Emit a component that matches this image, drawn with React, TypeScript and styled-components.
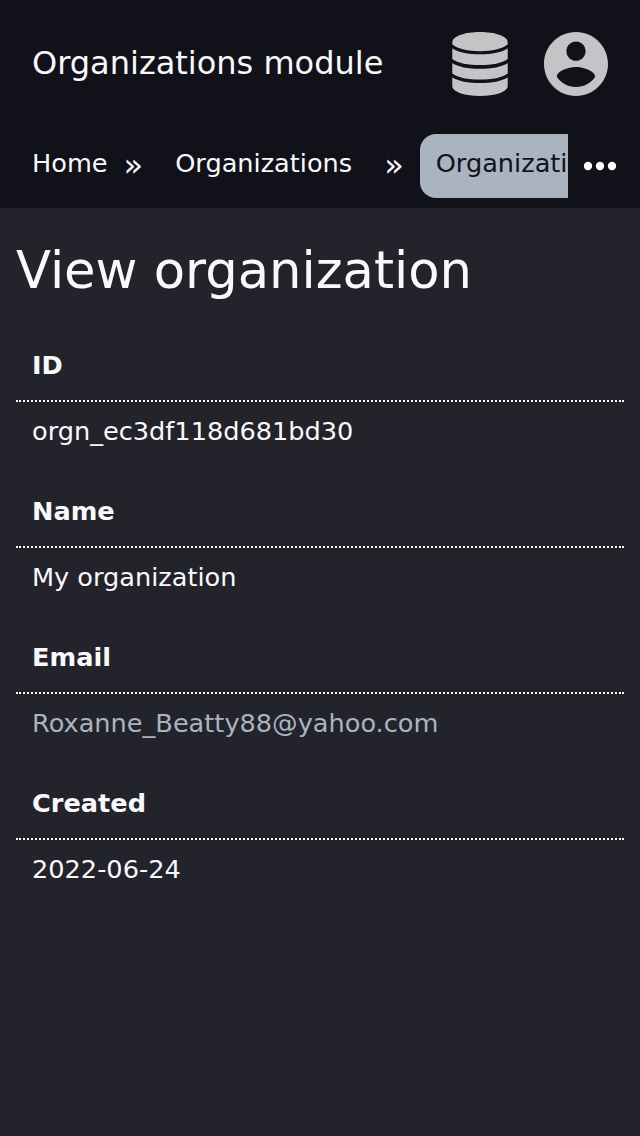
import React from 'react';
import styled, { createGlobalStyle } from 'styled-components';

const GlobalStyle = createGlobalStyle`
  * { box-sizing: border-box; }
  body { margin: 0; background: #23232b; color: #f9f9fd; font-family: "DejaVu Sans", sans-serif; font-size: 25.6px; }
`;

const Page = styled.div`
  min-height: 1136px;
  background: #23232b;
`;

const Header = styled.header`
  height: 208px;
  background: #11111a;
`;

const TopBar = styled.div`
  height: 128px;
  padding: 0 32px;
  display: flex;
  align-items: center;
  gap: 32px;
`;

const ModuleTitle = styled.span`
  flex: 1;
  font-size: 32px;
  line-height: 40px;
  padding-bottom: 2px;
`;

const Icon = styled.svg`
  display: block;
  flex: none;
  fill: #c4c4c6;
`;

const Trail = styled.nav`
  height: 80px;
  padding: 6px 24px 10px 16px;
  display: flex;
  align-items: center;
`;

const Crumbs = styled.div`
  width: 552px;
  flex: none;
  display: flex;
  align-items: center;
  overflow: hidden;
`;

const Crumb = styled.a<{ $active?: boolean }>`
  flex: none;
  height: 64px;
  padding: 0 16px 6px;
  border-radius: 16px;
  line-height: 58px;
  white-space: nowrap;
  color: ${p => (p.$active ? '#11111a' : '#f9f9fd')};
  background: ${p => (p.$active ? '#a9b4c0' : 'transparent')};
`;

const Separator = styled.span<{ $before: number }>`
  flex: none;
  height: 64px;
  margin: 0 16px 0 ${p => p.$before}px;
  font-size: 32px;
  line-height: 62px;
`;

const More = styled.svg`
  flex: none;
  margin-left: 16px;
  fill: #fff;
`;

const Main = styled.main`
  padding: 32px 16px;
`;

const Heading = styled.h1`
  margin: 0;
  height: 92px;
  font-size: 51.2px;
  line-height: 60px;
  font-weight: 400;
`;

const Details = styled.dl`
  margin: 0;
`;

const Term = styled.dt`
  height: 70px;
  padding: 0 16px;
  line-height: 66px;
  font-weight: 700;
  border-bottom: 2px dotted #f9f9fd;
`;

const Value = styled.dd<{ $muted?: boolean }>`
  margin: 0;
  height: 76px;
  padding: 0 16px;
  line-height: 58px;
  color: ${p => (p.$muted ? '#a9b4c0' : '#f9f9fd')};
`;

const fields = [
  { label: 'ID', value: 'orgn_ec3df118d681bd30' },
  { label: 'Name', value: 'My organization' },
  { label: 'Email', value: 'Roxanne_Beatty88@yahoo.com', muted: true },
  { label: 'Created', value: '2022-06-24' },
];

export default function App() {
  return (
    <Page>
      <GlobalStyle />
      <Header>
        <TopBar>
          <ModuleTitle>Organizations module</ModuleTitle>
          <Icon width="64" height="64" viewBox="0 0 64 64">
            <path d="M4.300 10C5 4 17 0 32 0s27 4 27.700 10V12.500C54 17 44 19.200 32 19.200S10 17 4.300 12.500z" />
            <path d="M4.300 16.300C10 20.300 20 22.300 32 22.300S54 20.300 59.700 16.300V26.900C54 31 44 33.100 32 33.100S10 31 4.300 26.900z" />
            <path d="M4.300 30.900C10 34.900 20 36.700 32 36.700S54 34.900 59.700 30.900V41.400C54 45.500 44 47.600 32 47.600S10 45.500 4.300 41.400z" />
            <path d="M4.300 45.300C10 49.300 20 51.100 32 51.100S54 49.300 59.700 45.300V55C58.500 60 47 64 32 64S5.500 60 4.300 55z" />
          </Icon>
          <Icon width="64" height="64" viewBox="2 2 20 20">
            <path d="M12 2C6.480 2 2 6.480 2 12s4.480 10 10 10 10-4.480 10-10S17.520 2 12 2zm0 3c1.660 0 3 1.340 3 3s-1.340 3-3 3-3-1.340-3-3 1.340-3 3-3zm0 14.200c-2.500 0-4.710-1.280-6-3.220.03-1.990 4-3.080 6-3.080 1.990 0 5.970 1.090 6 3.080-1.290 1.940-3.500 3.220-6 3.220z" />
          </Icon>
        </TopBar>
        <Trail>
          <Crumbs>
            <Crumb>Home</Crumb>
            <Separator $before={0}>»</Separator>
            <Crumb>Organizations</Crumb>
            <Separator $before={16}>»</Separator>
            <Crumb $active>Organization</Crumb>
          </Crumbs>
          <More width="32" height="64" viewBox="0 0 32 64">
            <circle cx="4" cy="32" r="4.150" />
            <circle cx="16" cy="32" r="4.150" />
            <circle cx="28" cy="32" r="4.150" />
          </More>
        </Trail>
      </Header>
      <Main>
        <Heading>View organization</Heading>
        <Details>
          {fields.map(f => (
            <React.Fragment key={f.label}>
              <Term>{f.label}</Term>
              <Value $muted={f.muted}>{f.value}</Value>
            </React.Fragment>
          ))}
        </Details>
      </Main>
    </Page>
  );
}
